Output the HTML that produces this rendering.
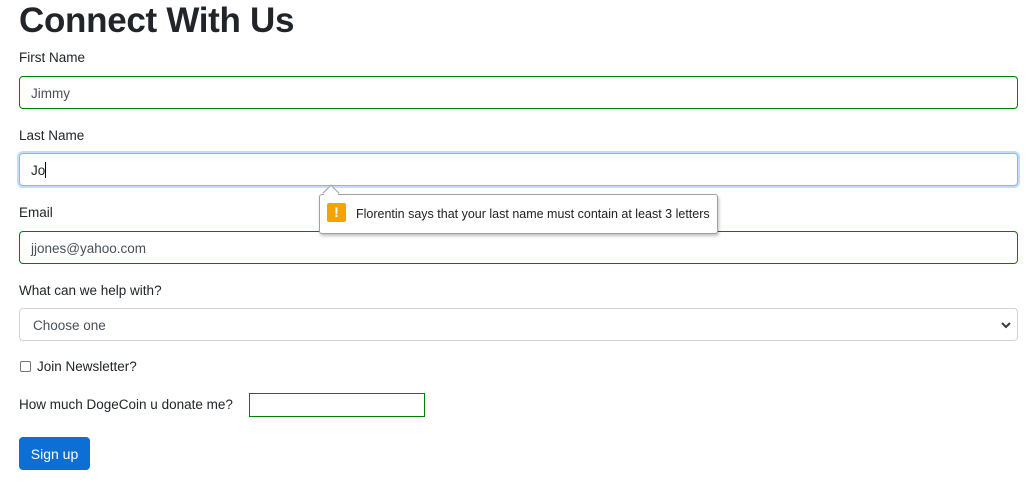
<!DOCTYPE html>
<html><head><style>
body{margin:0;background:#fff;font-family:"Liberation Sans",sans-serif;color:#212529;font-size:13.5px;}
.a{position:absolute;}
h1{position:absolute;left:19px;top:1px;margin:0;font-size:35px;font-weight:bold;line-height:40px;letter-spacing:-0.3px;}
.lbl{position:absolute;left:19px;font-size:13.5px;line-height:16px;}
.inp{position:absolute;left:19px;height:31px;border:1px solid green;border-radius:4px;box-sizing:content-box;font-size:13.5px;line-height:33px;padding-left:11px;width:986px;color:#495057;}
</style></head><body>
<h1>Connect With Us</h1>
<div class="lbl" style="top:50px">First Name</div>
<div class="inp" style="top:76px">Jimmy</div>
<div class="lbl" style="top:128px">Last Name</div>
<div class="inp" style="top:153px;border-color:#86b7fe;box-shadow:0 0 0 2px #c2dbfe;color:#212529">Jo<span style="display:inline-block;width:1px;height:16px;background:#000;vertical-align:-3px"></span></div>
<div class="lbl" style="top:205px">Email</div>
<div class="inp" style="top:231px">jjones@yahoo.com</div>
<div class="lbl" style="top:283px">What can we help with?</div>
<div class="inp" style="top:308px;border-color:#ced4da;padding-left:13px;width:984px">Choose one<svg class="a" style="right:6px;top:12px" width="10" height="8" viewBox="0 0 10 8"><path d="M1 2l4 4 4-4" stroke="#343a40" stroke-width="2" fill="none"/></svg></div>
<div class="a" style="left:20px;top:361px;width:9px;height:9px;border:1px solid #767676;border-radius:2px"></div>
<div class="lbl" style="left:37px;top:359px">Join Newsletter?</div>
<div class="lbl" style="top:397px">How much DogeCoin u donate me?</div>
<div class="a" style="left:249px;top:393px;width:174px;height:22px;border:1px solid green"></div>
<div class="a" style="left:19px;top:437px;width:71px;height:33px;background:#0b6fd6;border-radius:4px;color:#fff;font-size:14px;line-height:34px;text-align:center">Sign up</div>
<div class="a" style="left:319px;top:194px;width:397px;height:38px;background:#fff;border:1px solid #a0a0a0;border-radius:3px;box-shadow:1px 2px 3px rgba(0,0,0,.25)"></div>
<div class="a" style="left:325px;top:187px;width:11px;height:11px;background:#fff;border-left:1px solid #a0a0a0;border-top:1px solid #a0a0a0;transform:rotate(45deg)"></div>
<div class="a" style="left:327px;top:203px;width:19px;height:19px;background:#f5a300;border-radius:2px;color:#fff;font-weight:bold;text-align:center;line-height:19px;font-size:14px">!</div>
<div class="a" style="left:356px;top:207px;font-size:12.5px;line-height:15px;color:#222">Florentin says that your last name must contain at least 3 letters</div>
</body></html>
